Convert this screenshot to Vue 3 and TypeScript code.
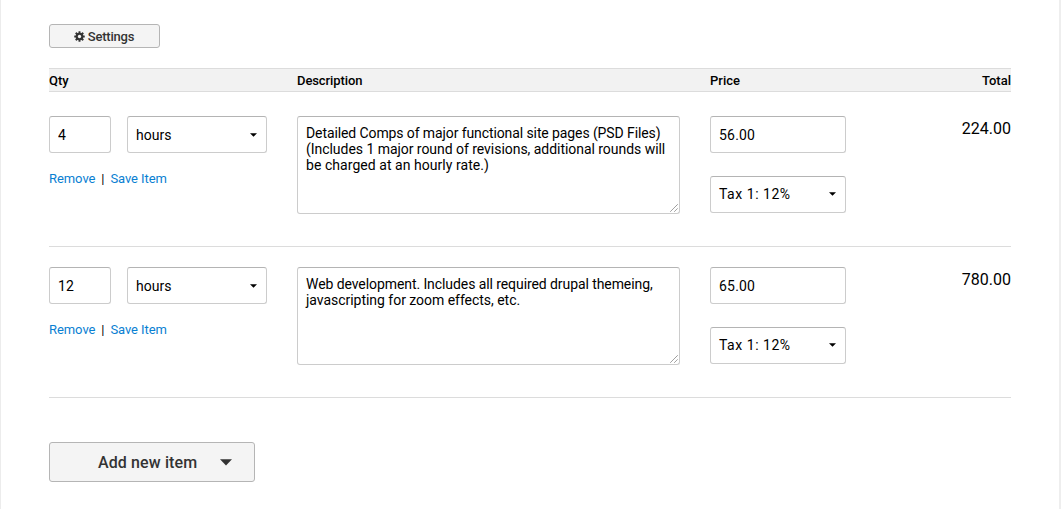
<script setup lang="ts">
import { ref } from 'vue'

interface TextLine {
  text: string
  tracking: number
}

interface LineItem {
  qty: string
  unit: string
  description: TextLine[]
  price: string
  tax: string
  total: string
}

const items = ref<LineItem[]>([
  {
    qty: '4',
    unit: 'hours',
    description: [
      { text: 'Detailed Comps of major functional site pages (PSD Files)', tracking: -0.1 },
      { text: '(Includes 1 major round of revisions, additional rounds will', tracking: -0.04 },
      { text: 'be charged at an hourly rate.)', tracking: 0.05 },
    ],
    price: '56.00',
    tax: 'Tax 1: 12%',
    total: '224.00',
  },
  {
    qty: '12',
    unit: 'hours',
    description: [
      { text: 'Web development. Includes all required drupal themeing,', tracking: -0.08 },
      { text: 'javascripting for zoom effects, etc.', tracking: -0.03 },
    ],
    price: '65.00',
    tax: 'Tax 1: 12%',
    total: '780.00',
  },
])
</script>

<template>
  <main class="page">
    <button class="settings" type="button">
      <svg class="gear" viewBox="0 0 22 22" aria-hidden="true">
        <g fill="#333">
          <rect v-for="a in [0, 45, 90, 135]" :key="a" x="9" y="0.5" width="4" height="21" rx="0.6" :transform="`rotate(${a} 11 11)`" />
          <circle cx="11" cy="11" r="7.7" />
        </g>
        <circle cx="11" cy="11" r="3.3" fill="#f4f4f4" />
      </svg>
      <span>Settings</span>
    </button>

    <header class="grid head">
      <span>Qty</span>
      <span class="head-desc">Description</span>
      <span>Price</span>
      <span class="right">Total</span>
    </header>

    <section v-for="(item, i) in items" :key="i" class="grid row">
      <div>
        <div class="qty-line">
          <input v-model="item.qty" class="box qty" type="text" aria-label="Quantity" />
          <button class="box select unit" type="button">
            <span>{{ item.unit }}</span>
            <svg class="caret" viewBox="0 0 7 4"><path d="M0 0.3h7L3.5 3.8z" /></svg>
          </button>
        </div>
        <div class="links"><a>Remove</a><i>|</i><a>Save Item</a></div>
      </div>
      <div class="desc-wrap">
        <div class="box desc" role="textbox" aria-multiline="true" aria-label="Description">
          <div
            v-for="line in item.description"
            :key="line.text"
            :style="{ letterSpacing: line.tracking + 'px' }"
          >{{ line.text }}</div>
        </div>
        <svg class="grip" viewBox="0 0 8 8"><path d="M0.5 7.5l7-7M4.5 7.5l3-3" /></svg>
      </div>
      <div class="price-col">
        <input v-model="item.price" class="box price" type="text" aria-label="Price" />
        <button class="box select tax" type="button">
          <span>{{ item.tax }}</span>
          <svg class="caret" viewBox="0 0 7 4"><path d="M0 0.3h7L3.5 3.8z" /></svg>
        </button>
      </div>
      <div class="total right">{{ item.total }}</div>
    </section>

    <button class="add" type="button">
      <span>Add new item</span>
      <svg class="big-caret" viewBox="0 0 12 7"><path d="M0 0.2h12L6 6.4z" /></svg>
    </button>
  </main>
</template>

<style>
body {
  background: #fff;
  overflow: hidden;
}
</style>

<style scoped>
.page {
  box-sizing: border-box;
  width: 1061px;
  height: 509px;
  padding: 24px 48px 0;
  border-left: 1px solid #ececec;
  border-right: 2px solid #eee;
  font-family: Roboto, 'Liberation Sans', sans-serif;
  color: #000;
  background: #fff;
}
button,
input {
  box-sizing: border-box;
  margin: 0;
  font-family: inherit;
  outline: none;
}
.settings {
  display: flex;
  align-items: center;
  justify-content: center;
  gap: 3px;
  width: 111px;
  height: 24px;
  padding: 0 1px 0 0;
  border: 1px solid #b5b5b5;
  border-radius: 3px;
  background: #f4f4f4;
  color: #333;
  font-size: 13px;
  font-weight: 500;
  letter-spacing: -0.2px;
}
.gear {
  width: 11px;
  height: 11px;
}
.grid {
  display: grid;
  grid-template-columns: 248px 413px 136px 1fr;
  width: 962px;
  box-sizing: border-box;
}
.head {
  height: 24px;
  margin: 20px 0 4px;
  border-top: 1px solid #dcdcdc;
  border-bottom: 1px solid #dcdcdc;
  background: #f2f2f2;
  font-size: 13px;
  font-weight: 500;
  line-height: 23px;
}
.head-desc {
  letter-spacing: -0.1px;
}
.right {
  text-align: right;
}
.row {
  height: 151px;
  padding-top: 20px;
  border-bottom: 1px solid #dcdcdc;
}
.qty-line {
  display: flex;
  gap: 16px;
}
.box {
  box-sizing: border-box;
  height: 37px;
  padding: 0 8px;
  border: 1px solid #ccc;
  border-top-color: #b4b4b4;
  border-radius: 3px;
  background: #fff;
  color: #000;
  font-size: 14px;
  letter-spacing: 0.2px;
}
.qty {
  width: 62px;
}
.unit {
  width: 140px;
}
.unit span {
  letter-spacing: 0;
}
.select {
  display: flex;
  align-items: center;
  justify-content: space-between;
  padding-right: 9px;
}
.caret {
  width: 7px;
  height: 4px;
}
.links {
  display: flex;
  margin-top: 17px;
  font-size: 13px;
  line-height: 18px;
  letter-spacing: -0.06px;
}
.links a {
  color: #0a80d2;
}
.links i {
  width: 15px;
  text-align: center;
  font-style: normal;
}
.desc-wrap {
  position: relative;
  width: 383px;
  height: 98px;
}
.desc {
  width: 383px;
  height: 98px;
  padding: 8px;
  line-height: 16px;
  white-space: pre;
}
.grip {
  position: absolute;
  right: 2px;
  bottom: 2px;
  width: 8px;
  height: 8px;
  fill: none;
  stroke: #555;
  stroke-width: 0.9;
  stroke-dasharray: 1.1 0.4;
}
.price-col {
  display: flex;
  flex-direction: column;
  gap: 23px;
}
.price,
.tax {
  width: 136px;
}
.tax {
  padding-bottom: 1px;
  letter-spacing: 0.53px;
}
.total {
  font-size: 16px;
  line-height: 26px;
}
.add {
  display: flex;
  align-items: center;
  width: 206px;
  height: 40px;
  margin-top: 44px;
  padding: 0 0 0 48px;
  border: 1px solid #b5b5b5;
  border-radius: 3px;
  background: #f4f4f4;
  color: #333;
  font-size: 16px;
  font-weight: 500;
  letter-spacing: 0.12px;
}
.big-caret {
  width: 12px;
  height: 7px;
  margin: 1px 0 0 23px;
  fill: #333;
}
</style>
